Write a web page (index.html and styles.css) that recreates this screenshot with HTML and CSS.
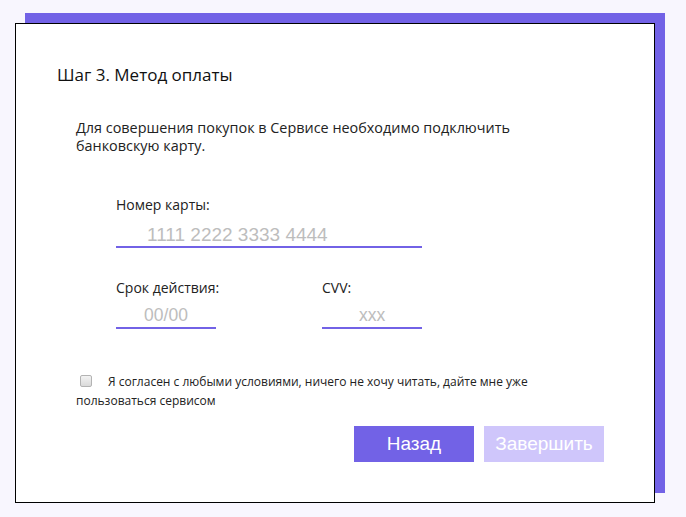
FILE: index.html
```html
<!DOCTYPE html>
<html lang="ru">
<head>
<meta charset="utf-8">
<title>Шаг 3. Метод оплаты</title>
<link rel="stylesheet" href="styles.css">
</head>
<body>
<div class="card">
  <h1 class="title">Шаг 3. Метод оплаты</h1>
  <div class="content">
    <p class="desc">Для совершения покупок в Сервисе необходимо подключить банковскую карту.</p>
    <div class="fields">
      <div class="field">
        <label class="label">Номер карты:</label>
        <input class="input input-card" type="text" placeholder="1111 2222 3333 4444">
      </div>
      <div class="row">
        <div class="field">
          <label class="label">Срок действия:</label>
          <input class="input input-small" type="text" placeholder="00/00">
        </div>
        <div class="field">
          <label class="label">CVV:</label>
          <input class="input input-small" type="text" placeholder="xxx">
        </div>
      </div>
    </div>
    <p class="agree"><input class="check" type="checkbox">Я согласен с любыми условиями, ничего не хочу читать, дайте мне уже пользоваться сервисом</p>
    <div class="actions">
      <button class="btn btn-primary" type="button">Назад</button>
      <button class="btn btn-disabled" type="button">Завершить</button>
    </div>
  </div>
</div>
</body>
</html>
```

FILE: styles.css
```css
html, body {
  margin: 0;
  padding: 0;
}
body {
  background: #f8f6fe;
  padding: 23px 0 0 15px;
  height: 517px;
  box-sizing: border-box;
  font-family: "Open Sans", "Liberation Sans", sans-serif;
  color: #222;
}
.card {
  width: 640px;
  height: 480px;
  box-sizing: border-box;
  background: #fff;
  border: 1px solid #000;
  box-shadow: 10px -10px 0 #7262e6;
  padding: 38px 0 0 41px;
}
.title {
  margin: 0;
  font-size: 17px;
  font-weight: 400;
  line-height: 25px;
  color: #111;
}
.content {
  padding: 32px 50px 0 19px;
}
.desc {
  margin: 0;
  font-size: 14.4px;
  line-height: 18px;
  width: 450px;
}
.fields {
  margin: 41px 0 0 40px;
}
.field {
  display: flex;
  flex-direction: column;
}
.label {
  font-size: 14px;
  line-height: 18px;
  color: #222;
  white-space: nowrap;
}
.input {
  box-sizing: border-box;
  border: none;
  border-bottom: 2px solid #7262e6;
  outline: none;
  background: transparent;
  font-family: "Liberation Sans", Arial, sans-serif;
  color: #222;
  margin: 0;
}
.input::placeholder {
  color: #bdbdbd;
}
.input-card {
  width: 306px;
  height: 34px;
  padding: 10px 0 0 31px;
  font-size: 19px;
}
.input-small {
  width: 100px;
  height: 32px;
  padding: 6px 0 0;
  font-size: 17.5px;
  text-align: center;
}
.row {
  display: grid;
  grid-template-columns: 100px 100px;
  column-gap: 106px;
  margin-top: 31px;
}
.agree {
  margin: 43px 0 0;
  font-size: 12px;
  line-height: 19px;
  color: #222;
}
.check {
  appearance: none;
  -webkit-appearance: none;
  width: 12px;
  height: 12px;
  margin: 0 16px 0 4px;
  border: 1px solid #b3b3b3;
  border-radius: 2px;
  background: linear-gradient(#f3f3f3, #dadada);
  vertical-align: -1px;
}
.actions {
  display: flex;
  justify-content: flex-end;
  gap: 10px;
  margin-top: 16px;
}
.btn {
  width: 120px;
  height: 36px;
  border: none;
  padding: 0;
  font-family: "Liberation Sans", Arial, sans-serif;
  font-size: 19px;
  color: #fff;
  cursor: pointer;
}
.btn-primary {
  background: #7262e6;
}
.btn-disabled {
  background: #cfc6fb;
}
```
